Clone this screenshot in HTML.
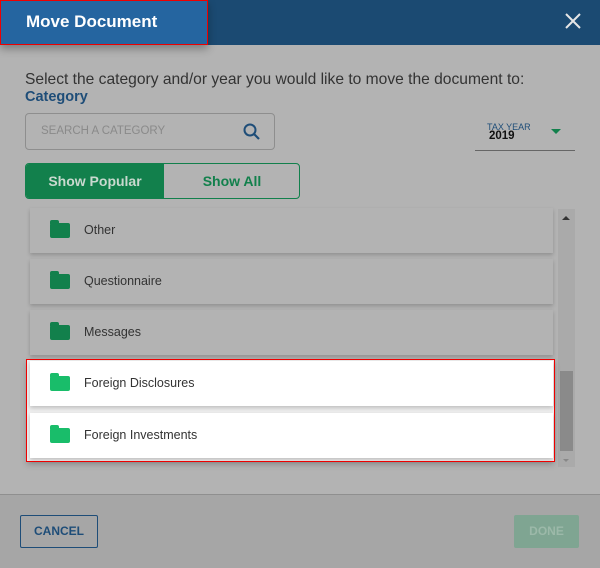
<!DOCTYPE html>
<html><head><style>
*{box-sizing:border-box;margin:0;padding:0}
body{width:600px;height:568px;background:#b3b3b3;font-family:"Liberation Sans",sans-serif;position:relative;overflow:hidden}
.hdr{position:absolute;left:0;top:0;width:600px;height:45px;background:#1b4a72}
.ttl{position:absolute;left:0;top:0;width:208px;height:45px;background:#2565a0;border:1px solid #e00;box-shadow:0 4px 8px rgba(0,0,0,.3);color:#fff;font-weight:bold;font-size:17px;padding:11px 0 0 25px}
.x{position:absolute;left:564px;top:12px}
.t{position:absolute;left:25px;top:71px;font-size:15.6px;color:#333;white-space:nowrap}
.cat{position:absolute;left:25px;top:89px;font-size:14.5px;font-weight:bold;color:#1e4d78}
.srch{position:absolute;left:25px;top:113px;width:250px;height:37px;border:1px solid #8e8e8e;border-radius:4px;font-size:11.5px;color:#8a8a8a;padding:11px 0 0 15px}
.ty{position:absolute;left:475px;top:122px;width:100px;height:29px;border-bottom:1px solid #666}
.tgl{position:absolute;left:25px;top:163px;width:275px;height:36px;border:1px solid #12804c;border-radius:4px;overflow:hidden;font-size:14px;font-weight:bold}
.tgl div{position:absolute;top:0;height:34px;line-height:34px;text-align:center}
.it{position:absolute;left:30px;width:523px;height:45px;background:#b3b3b3;box-shadow:0 2px 4px rgba(0,0,0,.2);font-size:12.5px;color:#333;line-height:45px;padding-left:54px}
.it i{position:absolute;left:20px;top:15px;width:20px;height:15px;border-radius:2px;background:#12804c}
.it i:before{content:"";position:absolute;left:0;top:-3px;width:9px;height:4px;background:inherit;border-radius:2px 2px 0 0}
.w{background:#fff}
.w i{background:#19bd6a}
</style></head><body>
<div class="hdr"></div>
<div class="ttl">Move Document</div>
<svg class="x" width="18" height="18" viewBox="0 0 18 18"><path d="M2 2L16 16M16 2L2 16" stroke="#e6e6e6" stroke-width="2"/></svg>
<div class="t">Select the category and/or year you would like to move the document to:</div>
<div class="cat">Category</div>
<div class="srch">SEARCH A CATEGORY
<svg style="position:absolute;left:217px;top:9px" width="18" height="18" viewBox="0 0 18 18"><circle cx="7" cy="7" r="5.5" fill="none" stroke="#1e4d78" stroke-width="2"/><path d="M11 11L16 16" stroke="#1e4d78" stroke-width="2.2"/></svg></div>
<div class="ty"><div style="position:absolute;left:12px;top:0;font-size:9px;color:#1e4d78">TAX YEAR</div><div style="position:absolute;left:14px;top:8px;font-size:11.5px;font-weight:bold;color:#111">2019</div><div style="position:absolute;left:76px;top:7px;width:0;height:0;border-left:5px solid transparent;border-right:5px solid transparent;border-top:5px solid #12804c"></div></div>
<div class="tgl"><div style="left:0;width:138px;background:#12804c;color:#c9d9cf">Show Popular</div><div style="left:138px;width:136px;color:#12804c">Show All</div></div>
<div style="position:absolute;left:558px;top:209px;width:17px;height:258px;background:#aaa"></div>
<div style="position:absolute;left:560px;top:371px;width:13px;height:80px;background:#8a8a8a"></div>
<div style="position:absolute;left:562px;top:216px;border-left:4px solid transparent;border-right:4px solid transparent;border-bottom:4px solid #333"></div>
<div style="position:absolute;left:563px;top:459px;border-left:3px solid transparent;border-right:3px solid transparent;border-top:3px solid #888"></div>
<div class="it" style="top:208px"><i></i>Other</div>
<div class="it" style="top:259px"><i></i>Questionnaire</div>
<div class="it" style="top:310px"><i></i>Messages</div>
<div style="position:absolute;left:27px;top:360px;width:527px;height:101px;background:#eee;box-shadow:0 3px 6px rgba(0,0,0,.25)"></div>
<div class="it w" style="top:361px"><i></i>Foreign Disclosures</div>
<div class="it w" style="top:413px"><i></i>Foreign Investments</div>
<div style="position:absolute;left:26px;top:359px;width:529px;height:103px;border:1px solid #e00"></div>
<div style="position:absolute;left:0;top:494px;width:600px;height:74px;background:#a6a6a6;border-top:1px solid #8f8f8f"></div>
<div style="position:absolute;left:20px;top:515px;width:78px;height:33px;border:1px solid #1e4d78;border-radius:2px;color:#1e4d78;font-size:12px;font-weight:bold;text-align:center;line-height:31px">CANCEL</div>
<div style="position:absolute;left:514px;top:515px;width:65px;height:33px;background:#7fa592;border-radius:2px;color:#9cb9a9;font-size:12px;font-weight:bold;text-align:center;line-height:33px">DONE</div>
</body></html>
